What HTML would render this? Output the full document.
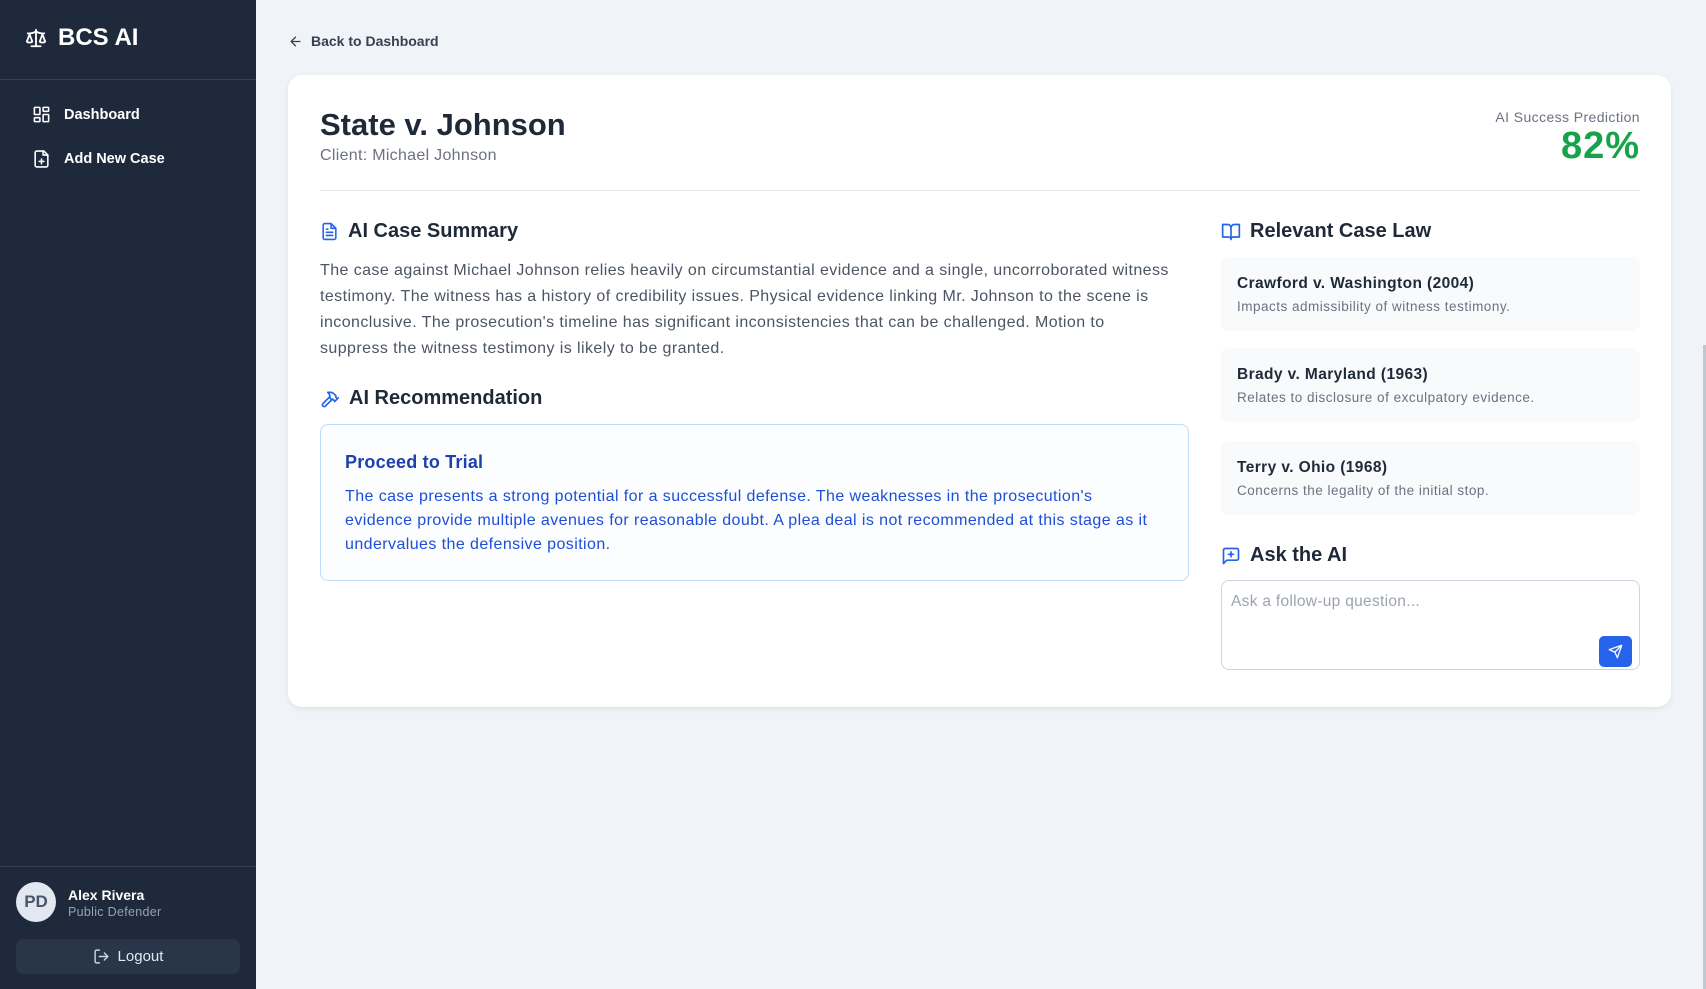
<!DOCTYPE html>
<html><head><meta charset="utf-8"><style>
*{box-sizing:border-box;margin:0;padding:0}
body{width:1706px;height:989px;overflow:hidden;background:#f0f3f8;font-family:"Liberation Sans",sans-serif;position:relative;color:#1f2937}
.sb{position:absolute;left:0;top:0;width:256px;height:989px;background:#1e293b;color:#fff}
.logo{position:absolute;left:24px;top:24px;font-size:24px;font-weight:bold;display:flex;align-items:center;gap:10px}
.hr1{position:absolute;left:0;top:79px;width:256px;height:1px;background:#334155}
.nav{position:absolute;left:32px;font-size:14.5px;font-weight:bold;display:flex;align-items:center;gap:13px}
.hr2{position:absolute;left:0;top:866px;width:256px;height:1px;background:#334155}
.av{position:absolute;left:16px;top:882px;width:40px;height:40px;border-radius:50%;background:#e2e8f0;color:#475569;font-size:17px;font-weight:bold;display:flex;align-items:center;justify-content:center}
.logout{position:absolute;left:16px;top:939px;width:224px;height:35px;border-radius:8px;background:#293548;color:#e2e8f0;font-size:15px;display:flex;align-items:center;justify-content:center;gap:8px}
.back{position:absolute;left:288px;top:33px;font-size:14px;font-weight:bold;color:#374151;display:flex;align-items:center;gap:8px}
.card{position:absolute;left:288px;top:75px;width:1383px;height:632px;background:#fff;border-radius:14px;box-shadow:0 2px 6px rgba(0,0,0,.07)}
.abs{position:absolute}
h2{position:absolute;font-size:20px;font-weight:bold;color:#1f2937;display:flex;align-items:center;gap:9px}
.cl{position:absolute;left:933px;width:419px;height:74px;background:#f8fafc;border-radius:8px;padding:18px 16px}
.cl b{display:block;font-size:15.5px;color:#1f2937;letter-spacing:.4px}
.cl span{display:block;font-size:13.5px;color:#6b7280;margin-top:6px;letter-spacing:.5px}
</style></head><body>
<div class="sb">
 <div class="logo"><svg width="24" height="22" viewBox="0 0 24 24" fill="none" stroke="#fff" stroke-width="2" stroke-linecap="round" stroke-linejoin="round"><path d="M16 16l3-8 3 8c-.9.7-1.9 1-3 1s-2.1-.3-3-1z"/><path d="M2 16l3-8 3 8c-.9.7-1.9 1-3 1s-2.1-.3-3-1z"/><path d="M7 21h10M12 3v18M3 7h2c2 0 5-1 7-2 2 1 5 2 7 2h2"/></svg>BCS AI</div>
 <div class="hr1"></div>
 <div class="nav" style="top:105px"><svg width="19" height="19" viewBox="0 0 24 24" fill="none" stroke="#fff" stroke-width="2"><rect x="3" y="3" width="7" height="9" rx="1"/><rect x="14" y="3" width="7" height="5" rx="1"/><rect x="14" y="12" width="7" height="9" rx="1"/><rect x="3" y="16" width="7" height="5" rx="1"/></svg>Dashboard</div>
 <div class="nav" style="top:149px"><svg width="19" height="20" viewBox="0 0 24 24" fill="none" stroke="#fff" stroke-width="2" stroke-linecap="round" stroke-linejoin="round"><path d="M15 2H6a2 2 0 0 0-2 2v16a2 2 0 0 0 2 2h12a2 2 0 0 0 2-2V7z"/><path d="M14 2v5h6M12 12v6M9 15h6"/></svg>Add New Case</div>
 <div class="hr2"></div>
 <div class="av">PD</div>
 <div class="abs" style="left:68px;top:887px;font-size:14px;font-weight:bold">Alex Rivera</div>
 <div class="abs" style="left:68px;top:905px;font-size:12.5px;color:#94a3b8;letter-spacing:.3px">Public Defender</div>
 <div class="logout"><svg width="17" height="17" viewBox="0 0 24 24" fill="none" stroke="#cbd5e1" stroke-width="2" stroke-linecap="round" stroke-linejoin="round"><path d="M9 21H5a2 2 0 0 1-2-2V5a2 2 0 0 1 2-2h4M16 17l5-5-5-5M21 12H9"/></svg>Logout</div>
</div>
<div class="back"><svg width="15" height="15" viewBox="0 0 24 24" fill="none" stroke="#374151" stroke-width="2" stroke-linecap="round" stroke-linejoin="round"><path d="M19 12H5M12 19l-7-7 7-7"/></svg>Back to Dashboard</div>
<div class="card">
 <div class="abs" style="left:32px;top:32px;font-size:31px;font-weight:bold;color:#1f2937">State v. Johnson</div>
 <div class="abs" style="left:32px;top:72px;font-size:16px;color:#6b7280;letter-spacing:.3px">Client: Michael Johnson</div>
 <div class="abs" style="right:31px;top:34px;font-size:14px;color:#6b7280;letter-spacing:.4px">AI Success Prediction</div>
 <div class="abs" style="right:31px;top:50px;font-size:38px;font-weight:bold;color:#16a34a;letter-spacing:1px">82%</div>
 <div class="abs" style="left:32px;top:115px;width:1320px;height:1px;background:#e5e7eb"></div>
 <h2 style="left:32px;top:145px"><svg width="19" height="21" viewBox="0 0 24 24" fill="none" stroke="#2563eb" stroke-width="2" stroke-linecap="round" stroke-linejoin="round"><path d="M14 2H6a2 2 0 0 0-2 2v16a2 2 0 0 0 2 2h12a2 2 0 0 0 2-2V8z"/><path d="M14 2v6h6M16 13H8M16 17H8M10 9H8"/></svg>AI Case Summary</h2>
 <div class="abs" style="left:32px;top:183px;width:853px;font-size:16px;line-height:26px;color:#4b5563;letter-spacing:.42px">The case against Michael Johnson relies heavily on circumstantial evidence and a single, uncorroborated witness testimony. The witness has a history of credibility issues. Physical evidence linking Mr. Johnson to the scene is inconclusive. The prosecution's timeline has significant inconsistencies that can be challenged. Motion to suppress the witness testimony is likely to be granted.</div>
 <h2 style="left:32px;top:312px"><svg width="20" height="20" viewBox="0 0 24 24" fill="none" stroke="#2563eb" stroke-width="2" stroke-linecap="round" stroke-linejoin="round"><path d="M15 12l-8.5 8.5a2.1 2.1 0 0 1-3-3L12 9M17.6 15L22 10.6M20.9 11.7l-1.3-1.3c-.4-.4-.6-.9-.6-1.4v-.9l-2.3-2.3a6 6 0 0 0-4.2-1.8H9.3l.9.8A6.6 6.6 0 0 1 12 9.4v1.4l2 2h1.2c.5 0 1 .2 1.4.6l1.3 1.3"/></svg>AI Recommendation</h2>
 <div class="abs" style="left:32px;top:349px;width:869px;height:157px;border:1px solid #bfdbfe;border-radius:8px;background:#fbfdff;padding:24px 24px">
  <div style="font-size:18px;font-weight:bold;color:#1e40af;margin-top:3px;letter-spacing:.2px">Proceed to Trial</div>
  <div style="font-size:16px;line-height:24px;color:#1d4ed8;margin-top:12px;letter-spacing:.42px">The case presents a strong potential for a successful defense. The weaknesses in the prosecution's evidence provide multiple avenues for reasonable doubt. A plea deal is not recommended at this stage as it undervalues the defensive position.</div>
 </div>
 <h2 style="left:933px;top:145px"><svg width="20" height="20" viewBox="0 0 24 24" fill="none" stroke="#2563eb" stroke-width="2" stroke-linecap="round" stroke-linejoin="round"><path d="M2 3h6a4 4 0 0 1 4 4v14a3 3 0 0 0-3-3H2zM22 3h-6a4 4 0 0 0-4 4v14a3 3 0 0 1 3-3h7z"/></svg>Relevant Case Law</h2>
 <div class="cl" style="top:182px"><b>Crawford v. Washington (2004)</b><span>Impacts admissibility of witness testimony.</span></div>
 <div class="cl" style="top:273px"><b>Brady v. Maryland (1963)</b><span>Relates to disclosure of exculpatory evidence.</span></div>
 <div class="cl" style="top:366px"><b>Terry v. Ohio (1968)</b><span>Concerns the legality of the initial stop.</span></div>
 <h2 style="left:933px;top:469px"><svg width="20" height="20" viewBox="0 0 24 24" fill="none" stroke="#2563eb" stroke-width="2" stroke-linecap="round" stroke-linejoin="round"><path d="M21 15a2 2 0 0 1-2 2H7l-4 4V5a2 2 0 0 1 2-2h14a2 2 0 0 1 2 2z"/><path d="M12 7v6M9 10h6"/></svg>Ask the AI</h2>
 <div class="abs" style="left:933px;top:505px;width:419px;height:90px;border:1px solid #cbd5e1;border-radius:8px;padding:12px 9px;font-size:15.5px;color:#9ca3af;letter-spacing:.3px">Ask a follow-up question...</div>
 <div class="abs" style="left:1311px;top:561px;width:33px;height:31px;border-radius:5px;background:#2563eb;display:flex;align-items:center;justify-content:center"><svg width="15" height="15" viewBox="0 0 24 24" fill="none" stroke="#fff" stroke-width="2" stroke-linecap="round" stroke-linejoin="round"><path d="M22 2L11 13M22 2l-7 20-4-9-9-4z"/></svg></div>
</div>
<div class="abs" style="left:1703px;top:345px;width:3px;height:644px;background:#c1c7d0"></div>
</body></html>
